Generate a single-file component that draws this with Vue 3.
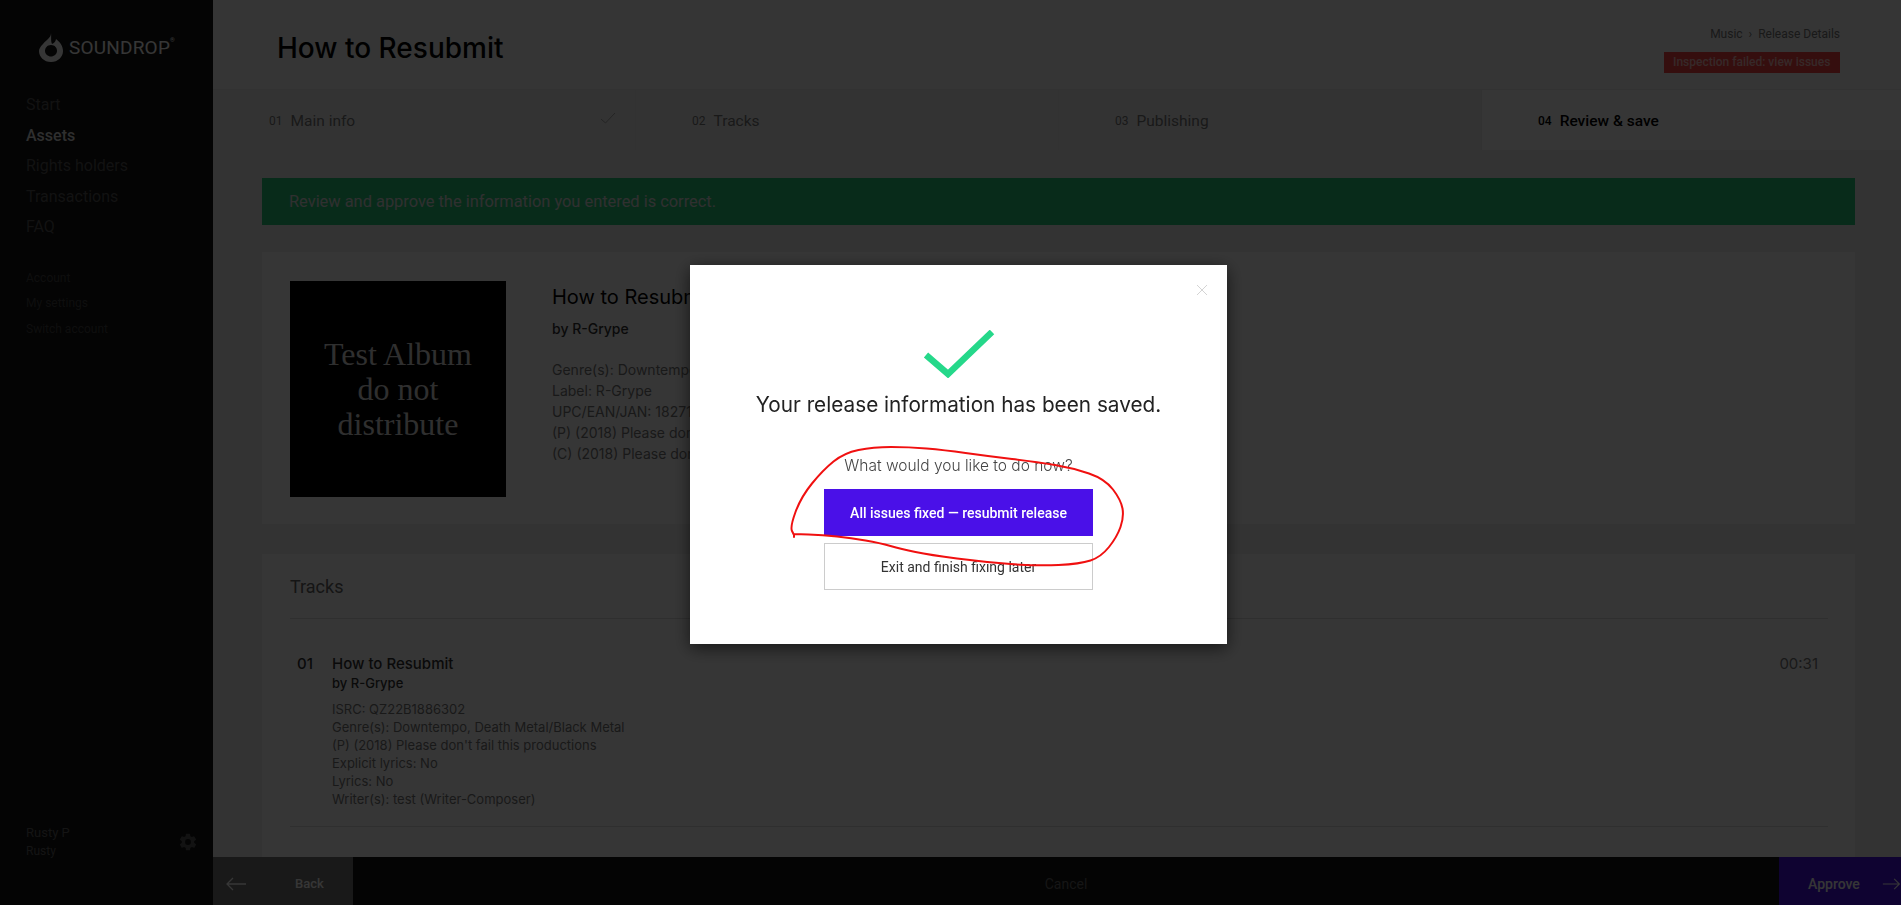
<script setup>
const mainNav = ["Start", "Assets", "Rights holders", "Transactions", "FAQ"]
const subNav = ["Account", "My settings", "Switch account"]

const steps = [
  { no: "01", label: "Main info", done: true },
  { no: "02", label: "Tracks" },
  { no: "03", label: "Publishing" },
  { no: "04", label: "Review & save", active: true },
]

const releaseInfo = [
  "Genre(s): Downtempo, Death Metal/Black Metal",
  "Label: R-Grype",
  "UPC/EAN/JAN: 182712345678",
  "(P) (2018) Please don't fail this productions",
  "(C) (2018) Please don't fail this productions",
]

const trackInfo = [
  "ISRC: QZ22B1886302",
  "Genre(s): Downtempo, Death Metal/Black Metal",
  "(P) (2018) Please don't fail this productions",
  "Explicit lyrics: No",
  "Lyrics: No",
  "Writer(s): test (Writer-Composer)",
]

// the hand drawn circle round the resubmit button
const scribble = [
  [794, 535], [790, 527], [801, 497], [823, 470], [844, 453], [873, 447], [909, 447],
  [944, 450], [987, 456], [1037, 462], [1073, 468], [1105, 479], [1121, 500], [1124, 517],
  [1117, 537], [1101, 557], [1080, 564], [1037, 566], [984, 562], [930, 555], [901, 549],
  [880, 543], [851, 538], [823, 535], [794, 534],
]

const scribblePath = scribble.reduce((d, p, i) => {
  if (i === 0) return `M${p[0]} ${p[1]}`
  const prev = scribble[i - 1]
  return `${d} Q${prev[0]} ${prev[1]} ${(prev[0] + p[0]) / 2} ${(prev[1] + p[1]) / 2}`
}, "") + " L794 534 L794 537"
</script>

<template>
  <div class="page">
    <aside class="sidebar">
      <div class="logo">
        <svg width="24" height="29" viewBox="0 0 24 29">
          <path d="M12 0 C12 5 8 6 4 11 C1 14 0 16 0 18 C0 24 5 29 12 29 C19 29 24 24 24 18 C24 13 21 9 17 6 C16.500 9 15 10 13 11 C11.500 8 12.500 3 12 0 Z M12 12 C16 12 18 15 18 18 C18 21 15 23.500 12 23.500 C9 23.500 6 21 6 18 C6 15 8 12 12 12 Z" fill="#fff" fill-rule="evenodd" />
        </svg>
        <span class="logo-name">SOUNDROP</span>
        <sup class="logo-mark">®</sup>
      </div>
      <nav class="main-nav">
        <a v-for="item in mainNav" :key="item" :class="{ current: item === 'Assets' }">{{ item }}</a>
      </nav>
      <nav class="sub-nav">
        <a v-for="item in subNav" :key="item">{{ item }}</a>
      </nav>
      <div class="user">
        <div>
          <div class="user-name">Rusty P</div>
          <div class="user-org">Rusty</div>
        </div>
        <svg class="gear" width="20" height="20" viewBox="0 0 24 24">
          <path d="M19.400 13c.04-.33.060-.66.060-1s-.02-.67-.06-1l2.100-1.650a.5.5 0 0 0 .12-.64l-2-3.460a.5.5 0 0 0-.61-.22l-2.490 1a7.300 7.300 0 0 0-1.690-.98l-.38-2.650A.5.5 0 0 0 14 2h-4a.5.5 0 0 0-.49.42l-.38 2.650c-.61.25-1.170.59-1.690.98l-2.490-1a.5.5 0 0 0-.61.22l-2 3.460a.5.5 0 0 0 .12.64L4.560 11c-.04.33-.06.67-.06 1s.02.67.06 1l-2.100 1.650a.5.5 0 0 0-.12.64l2 3.460c.12.22.39.3.61.22l2.490-1c.52.4 1.080.73 1.690.98l.38 2.650c.05.24.25.42.49.42h4c.24 0 .44-.18.49-.42l.38-2.650c.61-.25 1.170-.59 1.690-.98l2.490 1c.22.08.49 0 .61-.22l2-3.460a.5.5 0 0 0-.12-.64L19.400 13zM12 15.500a3.500 3.500 0 1 1 0-7 3.500 3.500 0 0 1 0 7z" fill="#555" />
        </svg>
      </div>
    </aside>

    <main class="main">
      <header class="top">
        <h1>How to Resubmit</h1>
        <div class="top-right">
          <div class="crumbs">Music <span class="crumb-sep">›</span> Release Details</div>
          <div class="failed">Inspection failed: view issues</div>
        </div>
      </header>

      <div class="steps">
        <div v-for="step in steps" :key="step.no" class="step" :class="{ active: step.active }">
          <span class="step-no">{{ step.no }}</span>
          <span>{{ step.label }}</span>
          <svg v-if="step.done" class="step-check" width="16" height="12" viewBox="0 0 16 12">
            <path d="M1 7 L5.500 11 L15 1" fill="none" stroke="#aaa" stroke-width="1" />
          </svg>
        </div>
      </div>

      <div class="content">
        <div class="notice">Review and approve the information you entered is correct.</div>

        <section class="panel release">
          <div class="cover">Test Album<br />do not<br />distribute</div>
          <div class="release-info">
            <h2>How to Resubmit</h2>
            <div class="by">by R-Grype</div>
            <div v-for="line in releaseInfo" :key="line" class="info-line">{{ line }}</div>
          </div>
        </section>

        <section class="panel tracks">
          <h3>Tracks</h3>
          <div class="track">
            <div class="track-no">01</div>
            <div class="track-body">
              <div class="track-title">How to Resubmit</div>
              <div class="track-by">by R-Grype</div>
              <div class="track-info">
                <div v-for="line in trackInfo" :key="line">{{ line }}</div>
              </div>
            </div>
            <div class="track-time">00:31</div>
          </div>
        </section>
      </div>
    </main>

    <footer class="bottom">
      <a class="back">
        <svg width="22" height="14" viewBox="0 0 22 14">
          <path d="M21 7 H2 M8 1 L2 7 L8 13" fill="none" stroke="#fff" stroke-width="1.300" />
        </svg>
        <span>Back</span>
      </a>
      <a class="cancel">Cancel</a>
      <a class="approve">
        <span>Approve</span>
        <svg width="22" height="14" viewBox="0 0 22 14">
          <path d="M1 7 H20 M14 1 L20 7 L14 13" fill="none" stroke="#fff" stroke-width="1.300" />
        </svg>
      </a>
    </footer>

    <div class="overlay">
      <div class="modal">
        <svg class="close" width="12" height="12" viewBox="0 0 12 12">
          <path d="M1 1 L11 11 M11 1 L1 11" fill="none" stroke="#d4d4d4" stroke-width="1" />
        </svg>
        <svg class="check" width="72" height="48" viewBox="0 0 72 48">
          <path d="M3 25 L25 44 L69 2" fill="none" stroke="#25d88a" stroke-width="6.500" />
        </svg>
        <div class="modal-title">Your release information has been saved.</div>
        <div class="modal-question">What would you like to do now?</div>
        <button class="btn primary">All issues fixed — resubmit release</button>
        <button class="btn plain">Exit and finish fixing later</button>
      </div>
    </div>

    <svg class="scribble" width="1901" height="905" viewBox="0 0 1901 905">
      <path :d="scribblePath" fill="none" stroke="#f01010" stroke-width="2" stroke-linecap="round" />
    </svg>
  </div>
</template>

<style>
html,
body {
  margin: 0;
  overflow: hidden;
}
</style>

<style scoped>
.page {
  display: flex;
  height: 905px;
  overflow: hidden;
  font-family: Roboto, "Liberation Sans", sans-serif;
  background: #f2f2f2;
  color: #000;
}

a {
  display: block;
}

/* sidebar */
.sidebar {
  width: 213px;
  flex: none;
  display: flex;
  flex-direction: column;
  background: #131313;
  box-sizing: border-box;
  padding: 33px 0 0 26px;
}

.logo {
  display: flex;
  align-items: flex-start;
  margin-left: 13px;
  height: 29px;
  color: #fff;
}

.logo-name {
  margin-left: 6px;
  font-size: 19px;
  line-height: 29px;
  letter-spacing: 0.2px;
  white-space: nowrap;
}

.logo-mark {
  font-size: 6px;
  line-height: 14px;
}

.main-nav {
  margin-top: 28px;
}

.main-nav a {
  height: 30.500px;
  line-height: 30.500px;
  font-size: 16px;
  color: #555;
}

.main-nav a.current {
  color: #ddd;
  font-weight: 500;
}

.sub-nav {
  margin-top: 23px;
}

.sub-nav a {
  height: 25.500px;
  line-height: 25.500px;
  font-size: 12px;
  color: #444;
}

.user {
  margin-top: auto;
  margin-bottom: 45px;
  display: flex;
  align-items: center;
  justify-content: space-between;
  padding-right: 15px;
}

.user-name {
  font-size: 13px;
  line-height: 18px;
  color: #606060;
}

.user-org {
  font-size: 12px;
  line-height: 18px;
  color: #606060;
}

/* main column */
.main {
  flex: 1;
  min-width: 0;
}

.top {
  height: 90px;
  box-sizing: border-box;
  display: flex;
  justify-content: space-between;
  padding: 0 61px 0 64px;
  background: #fafafa;
  border-bottom: 1px solid #eaeaea;
}

h1 {
  margin: 30px 0 0;
  font-family: Inter, Roboto, sans-serif;
  font-size: 28px;
  line-height: 36px;
  font-weight: 500;
}

.top-right {
  display: flex;
  flex-direction: column;
  align-items: flex-end;
  padding-top: 26px;
}

.crumbs {
  font-size: 12px;
  line-height: 16px;
  color: #777;
  white-space: pre;
}

.crumb-sep {
  margin: 0 3px;
}

.failed {
  margin-top: 10px;
  height: 21px;
  line-height: 21px;
  padding: 0 9px;
  width: 176px;
  box-sizing: border-box;
  background: #f84444;
  color: #ffc0c0;
  font-size: 12px;
  font-weight: 500;
  white-space: nowrap;
}

.steps {
  display: grid;
  grid-template-columns: 423px 423px 423px 1fr;
  height: 60px;
}

.step {
  position: relative;
  display: flex;
  align-items: center;
  gap: 8px;
  padding-left: 56px;
  padding-top: 2px;
  box-sizing: border-box;
  font-size: 15.500px;
  color: #777;
  background: #f2f2f2;
  border-right: 1px solid #ececec;
}

.step.active {
  background: #fff;
  color: #000;
  font-weight: 500;
  border-right: 0;
}

.step-no {
  font-size: 12px;
}

.step-check {
  position: absolute;
  left: 387px;
  top: 22px;
}

.content {
  padding: 28px 46px 0 49px;
}

.notice {
  height: 47px;
  box-sizing: border-box;
  padding-left: 27px;
  line-height: 47px;
  font-size: 16.400px;
  background: #26ca7d;
  color: #e0e0e0;
}

.panel {
  background: #fff;
  margin-top: 27px;
  padding: 0 27px 0 28px;
}

.release {
  height: 272px;
  box-sizing: border-box;
  padding-top: 29px;
  display: flex;
}

.cover {
  width: 216px;
  height: 216px;
  flex: none;
  display: flex;
  flex-direction: column;
  justify-content: center;
  background: #000;
  color: #ddd;
  text-align: center;
  font-family: "Liberation Serif", serif;
  font-size: 32px;
  line-height: 35px;
}

.release-info {
  margin-left: 46px;
  font-family: Inter, Roboto, sans-serif;
}

h2 {
  margin: 3px 0 0;
  font-size: 20px;
  line-height: 26px;
  font-weight: 400;
}

.by {
  margin: 9px 0 20px;
  font-size: 14px;
  line-height: 20px;
  font-weight: 500;
  color: #333;
}

.info-line {
  font-size: 14px;
  line-height: 21px;
  color: #777;
  white-space: nowrap;
}

.tracks {
  margin-top: 30px;
  height: 400px;
}

h3 {
  margin: 0;
  padding: 20px 0 18px;
  font-size: 18px;
  line-height: 26px;
  font-weight: 400;
  color: #666;
  border-bottom: 1px solid #ddd;
}

.track {
  display: flex;
  padding: 34.500px 10px 0 7px;
  height: 172.500px;
  border-bottom: 1px solid #ddd;
  font-family: Inter, Roboto, sans-serif;
}

.track-no {
  width: 35px;
  font-size: 15px;
  line-height: 20px;
  font-weight: 500;
  color: #333;
}

.track-body {
  flex: 1;
}

.track-title {
  font-size: 15px;
  line-height: 20px;
  font-weight: 500;
  color: #333;
}

.track-by {
  font-size: 13px;
  line-height: 18px;
  font-weight: 500;
  color: #333;
}

.track-info {
  margin-top: 8px;
  font-size: 13px;
  line-height: 18px;
  color: #777;
}

.track-time {
  font-size: 15px;
  line-height: 20px;
  color: #777;
}

/* bottom bar */
.bottom {
  position: fixed;
  left: 213px;
  right: 0;
  bottom: 0;
  height: 48px;
  display: flex;
  align-items: center;
  background: #131313;
  font-size: 13px;
}

.back {
  width: 140px;
  height: 100%;
  display: flex;
  align-items: center;
  box-sizing: border-box;
  padding: 5px 0 0 12px;
  gap: 48px;
  background: #757575;
  color: #fff;
  font-weight: 500;
}

.cancel {
  flex: 1;
  text-align: center;
  padding-top: 6px;
  font-size: 14px;
  color: #666;
}

.approve {
  width: 122px;
  height: 100%;
  display: flex;
  align-items: center;
  box-sizing: border-box;
  padding: 5px 0 0 29px;
  gap: 22px;
  background: #4a10e8;
  color: #fff;
  font-size: 14px;
  font-weight: 500;
  white-space: nowrap;
}

/* dialog */
.overlay {
  position: fixed;
  inset: 0;
  display: flex;
  align-items: center;
  justify-content: center;
  box-sizing: border-box;
  padding: 4px 0 0 16px;
  background: rgba(0, 0, 0, 0.79);
}

.modal {
  position: relative;
  width: 537px;
  height: 379px;
  box-sizing: border-box;
  padding-top: 65px;
  display: flex;
  flex-direction: column;
  align-items: center;
  background: #fff;
  box-shadow: 0 4px 16px rgba(0, 0, 0, 0.6);
}

.close {
  position: absolute;
  top: 19px;
  right: 19px;
}

.check {
  display: block;
}

.modal-title {
  margin-top: 13px;
  font-family: Inter, Roboto, sans-serif;
  font-size: 20.750px;
  line-height: 28px;
  color: #222;
  white-space: nowrap;
}

.modal-question {
  margin-top: 37px;
  font-family: Inter, Roboto, sans-serif;
  font-size: 15.500px;
  line-height: 20px;
  font-weight: 300;
  color: #444;
  white-space: nowrap;
}

.btn {
  display: block;
  width: 269px;
  height: 47px;
  box-sizing: border-box;
  padding: 0;
  font-family: Roboto, sans-serif;
  font-size: 14px;
  border-radius: 0;
}

.primary {
  margin-top: 13px;
  border: 0;
  background: #4a10e8;
  color: #fff;
  font-weight: 500;
}

.plain {
  margin-top: 7px;
  border: 1px solid #ccc;
  background: #fff;
  color: #333;
}

.scribble {
  position: fixed;
  left: 0;
  top: 0;
  pointer-events: none;
}
</style>
